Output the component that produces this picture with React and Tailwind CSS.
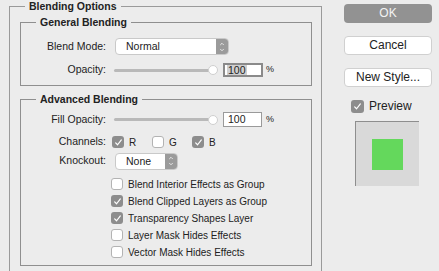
import { ChevronDown, ChevronUp } from 'lucide-react';

const font = { fontFamily: '"Liberation Sans", Arial, sans-serif' };

function Check({ checked, big }) {
  const size = big ? 'w-[13px] h-[13px]' : 'w-[12px] h-[12px]';
  if (!checked) {
    return <span className={`${size} shrink-0 rounded-[3px] border border-[#b3b3b3] bg-white`} />;
  }
  return (
    <span className={`${size} shrink-0 rounded-[3px] bg-[#8d8d8d] flex items-center justify-center`}>
      <svg viewBox="0 0 12 12" className="w-[9px] h-[9px]">
        <path d="M2.2 6.4 L4.8 9 L9.8 2.6" fill="none" stroke="white" strokeWidth="1.6" strokeLinecap="round" strokeLinejoin="round" />
      </svg>
    </span>
  );
}

function Select({ value, width }) {
  return (
    <div className={`${width} h-[17px] flex rounded-[4px] border border-[#c9c9c9] bg-white overflow-hidden`}>
      <span className="flex-1 pl-[10px] text-[10.5px] leading-[15px] text-[#222]">{value}</span>
      <span className="w-[12px] bg-[#9b9b9b] flex flex-col items-center justify-center">
        <ChevronUp className="w-[8px] h-[6px] text-white" strokeWidth={3} />
        <ChevronDown className="w-[8px] h-[6px] text-white" strokeWidth={3} />
      </span>
    </div>
  );
}

function Slider() {
  return (
    <div className="relative w-[104px] h-[12px] flex items-center">
      <div className="w-[100px] h-[3px] rounded bg-[#b9b9b9]" />
      <div className="absolute left-[94px] top-[1px] w-[10px] h-[10px] rounded-full bg-white border border-[#cfcfcf]" />
    </div>
  );
}

function Label({ children }) {
  return <span className="w-[86px] pr-[1px] text-right text-[10.5px] text-[#222]">{children}</span>;
}

const options = [
  ['Blend Interior Effects as Group', false],
  ['Blend Clipped Layers as Group', true],
  ['Transparency Shapes Layer', true],
  ['Layer Mask Hides Effects', false],
  ['Vector Mask Hides Effects', false],
];

export default function App() {
  return (
    <div className="w-[439px] h-[271px] bg-[#ececec] flex overflow-hidden text-[#222]" style={font}>
      {/* Left: option groups */}
      <fieldset className="ml-[9px] w-[313px] h-[290px] border border-[#9a9a9a] rounded-none">
        <legend className="ml-[15px] px-[4px] text-[10.5px] font-bold leading-[13px]">Blending Options</legend>

        <fieldset className="mt-[3px] ml-[10px] w-[292px] h-[70px] border border-[#8f8f8f]">
          <legend className="ml-[15px] px-[4px] text-[10.5px] font-bold leading-[13px]">General Blending</legend>
          <div className="mt-[9px] flex items-center h-[17px]">
            <Label>Blend Mode:</Label>
            <span className="ml-[8px]"><Select value="Normal" width="w-[114px]" /></span>
          </div>
          <div className="mt-[8px] flex items-center h-[14px]">
            <Label>Opacity:</Label>
            <span className="ml-[7px]"><Slider /></span>
            <div className="ml-[5px] w-[40px] h-[14px] border-2 border-[#8a8a8a] bg-white flex items-center pl-[2px]">
              <span className="bg-[#cfcfcf] text-[10.5px] leading-[10px] px-[1px]">100</span>
            </div>
            <span className="ml-[3px] text-[9px]">%</span>
          </div>
        </fieldset>

        <fieldset className="mt-[7px] ml-[10px] w-[292px] h-[173px] border border-[#8f8f8f]">
          <legend className="ml-[15px] px-[4px] text-[10.5px] font-bold leading-[13px]">Advanced Blending</legend>
          <div className="mt-[6px] flex items-center h-[15px]">
            <Label>Fill Opacity:</Label>
            <span className="ml-[7px]"><Slider /></span>
            <div className="ml-[5px] w-[39px] h-[15px] border border-[#9a9a9a] bg-white flex items-center pl-[4px]">
              <span className="text-[10.5px]">100</span>
            </div>
            <span className="ml-[4px] text-[9px]">%</span>
          </div>
          <div className="mt-[9px] flex items-center h-[12px]">
            <Label>Channels:</Label>
            <span className="ml-[5px] flex items-center gap-[5px] w-[40px]"><Check checked /><span className="text-[10px]">R</span></span>
            <span className="flex items-center gap-[5px] w-[40px]"><Check /><span className="text-[10px]">G</span></span>
            <span className="flex items-center gap-[5px]"><Check checked /><span className="text-[10px]">B</span></span>
          </div>
          <div className="mt-[4px] flex items-center h-[18px]">
            <Label>Knockout:</Label>
            <span className="ml-[8px]"><Select value="None" width="w-[63px]" /></span>
          </div>
          <div className="mt-[8px] ml-[90px] flex flex-col gap-[5px]">
            {options.map(([label, on]) => (
              <label key={label} className="flex items-center gap-[5px] h-[12px]">
                <Check checked={on} />
                <span className="text-[10px] text-[#222]">{label}</span>
              </label>
            ))}
          </div>
        </fieldset>
      </fieldset>

      {/* Right: buttons + preview */}
      <div className="ml-[22px] w-[88px] flex flex-col">
        <button className="mt-[4px] h-[19px] rounded-[4px] bg-[#929292] text-[#f2f2f2] text-[12px] leading-[19px]">OK</button>
        <button className="mt-[13px] h-[19px] rounded-[4px] bg-white border border-[#d0d0d0] text-[12px] leading-[17px]">Cancel</button>
        <button className="mt-[13px] h-[19px] rounded-[4px] bg-white border border-[#d0d0d0] text-[12px] leading-[17px]">New Style...</button>
        <div className="mt-[12px] ml-[7px] flex items-center gap-[5px] h-[14px]">
          <Check checked big />
          <span className="text-[12px]">Preview</span>
        </div>
        <div className="mt-[8px] ml-[11px] w-[64px] h-[65px] bg-[#d9d9d9] border-l border-t border-[#8e8e8e] flex items-center justify-center">
          <div className="w-[31px] h-[31px] bg-[#64d85c]" />
        </div>
      </div>
    </div>
  );
}
